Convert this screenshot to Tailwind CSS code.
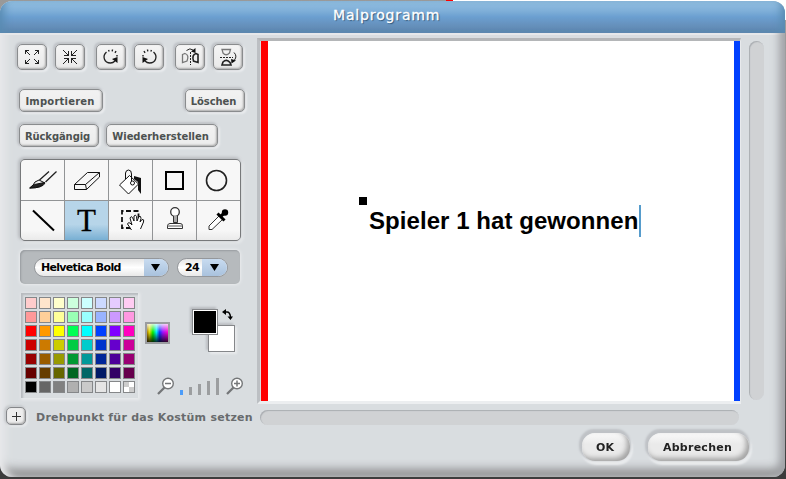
<!DOCTYPE html>
<html lang="de">
<head>
<meta charset="utf-8">
<title>Malprogramm</title>
<script src="https://cdn.jsdelivr.net/npm/@tailwindcss/browser@4"></script>
</head>
<body class="w-[786px] h-[479px] overflow-hidden bg-[linear-gradient(#999,#aaa_50%,#3c3c3c_98%)] pt-px font-['DejaVu_Sans',sans-serif]">
<div class="fixed top-0 left-[452px] w-[334px] h-[20px] bg-white"></div>
<div class="fixed top-0 left-[446px] w-[7px] h-[2px] bg-[#ff0000]"></div>
<div class="relative w-[785px] h-[476px] rounded-[12px] overflow-hidden bg-[#d9dde0] flex flex-col">
  <div class="absolute inset-0 pointer-events-none shadow-[inset_8px_0_7px_-2px_#e8e9eb,inset_-9px_0_8px_-3px_#a3a5a9,inset_0_-11px_10px_-3px_#909192] rounded-[12px]"></div>
  <header class="relative h-8 shrink-0 bg-[linear-gradient(#93bfe0,#80b0d9_30%,#6b9fd0_50%,#6691bd_75%,#5b86ac)] shadow-[inset_9px_0_9px_-5px_#598bb2,inset_-9px_0_9px_-5px_#598bb2] pl-[333px]">
    <h1 class="text-[14px] leading-[28px] text-white tracking-[0.85px] whitespace-nowrap [-webkit-text-stroke:0.3px_#fff] [text-shadow:1px_1px_1px_#2c5478]">Malprogramm</h1>
  </header>
  <div class="h-[2px] shrink-0 bg-[#e6e8ea]"></div>
  <main class="relative flex h-[367px] shrink-0">
    <section class="w-[257px] shrink-0 flex flex-col pt-[9px] text-[#4c5150]">
      <div class="flex h-[26px] ml-[17px]">
        <button class="w-[30px] h-[26px] mr-[8px] rounded-[5px] border border-[#8a8c8e] bg-[linear-gradient(#f5f5f5,#e9e9e9)] shadow-[inset_-1px_-1px_2px_#aaa,-1px_-1px_2px_1px_#c0c3c7,1px_1px_2px_1px_#eceef0] flex items-center justify-center"><svg width="16" height="16" viewBox="0 0 16 16" fill="none" stroke="#222" shape-rendering="crispEdges"><path d="M1.500 5V1.500H5M11 1.500H14.500V5M14.500 11V14.500H11M5 14.500H1.500V11M2 2L6 6M14 2L10 6M14 14L10 10M2 14L6 10"/></svg></button>
        <button class="w-[30px] h-[26px] mr-[11px] rounded-[5px] border border-[#8a8c8e] bg-[linear-gradient(#f5f5f5,#e9e9e9)] shadow-[inset_-1px_-1px_2px_#aaa,-1px_-1px_2px_1px_#c0c3c7,1px_1px_2px_1px_#eceef0] flex items-center justify-center"><svg width="16" height="16" viewBox="0 0 16 16" fill="none" stroke="#222" shape-rendering="crispEdges"><path d="M2 6.500H6.500V2M9.500 2V6.500H14M14 9.500H9.500V14M6.500 14V9.500H2M1 1L6 6M15 1L10 6M15 15L10 10M1 15L6 10"/></svg></button>
        <button class="w-[30px] h-[26px] mr-[8px] rounded-[5px] border border-[#8a8c8e] bg-[linear-gradient(#f5f5f5,#e9e9e9)] shadow-[inset_-1px_-1px_2px_#aaa,-1px_-1px_2px_1px_#c0c3c7,1px_1px_2px_1px_#eceef0] flex items-center justify-center"><svg width="18" height="18" viewBox="0 0 18 18" fill="none" stroke="#222"><path d="M4.500 4C0 8 2 15 8.500 15Q11 15 13 13" stroke-width="1.3"/><path d="M6.500 2l.7 1.500M10.500 1.500l-.3 1.800M14 3l-1 1.800M15 7v1.600" stroke-width="1.400"/><path d="M10 11L15.500 9V15Z" fill="#111" stroke="none"/></svg></button>
        <button class="w-[30px] h-[26px] mr-[11px] rounded-[5px] border border-[#8a8c8e] bg-[linear-gradient(#f5f5f5,#e9e9e9)] shadow-[inset_-1px_-1px_2px_#aaa,-1px_-1px_2px_1px_#c0c3c7,1px_1px_2px_1px_#eceef0] flex items-center justify-center"><svg width="18" height="18" viewBox="0 0 18 18" fill="none" stroke="#222"><path d="M13.500 4C18 8 16 15 9.500 15Q7 15 5 13" stroke-width="1.300"/><path d="M11.500 2l-.7 1.500M7.500 1.500l.3 1.800M4 3l1 1.800M3 7v1.600" stroke-width="1.400"/><path d="M8 11L2.500 9V15Z" fill="#111" stroke="none"/></svg></button>
        <button class="w-[30px] h-[26px] mr-[8px] rounded-[5px] border border-[#8a8c8e] bg-[linear-gradient(#f5f5f5,#e9e9e9)] shadow-[inset_-1px_-1px_2px_#aaa,-1px_-1px_2px_1px_#c0c3c7,1px_1px_2px_1px_#eceef0] flex items-center justify-center"><svg width="20" height="20" viewBox="0 0 20 20" fill="none" stroke="#222"><path d="M10.500 5V18" stroke-dasharray="2 1"/><path d="M2.500 7.500L5 6.500Q9.500 8 7 14L2.500 15.500Z" stroke="#777" stroke-width="1.300"/><path d="M18 7.500L16 6.500Q11.500 8 13.500 14L18 15.500Z" stroke-width="1.600"/><path d="M6.500 3.500Q10 .5 13 3"/><path d="M15.500 1V6L11 4.500Z" fill="#111" stroke="none"/></svg></button>
        <button class="w-[30px] h-[26px] rounded-[5px] border border-[#8a8c8e] bg-[linear-gradient(#f5f5f5,#e9e9e9)] shadow-[inset_-1px_-1px_2px_#aaa,-1px_-1px_2px_1px_#c0c3c7,1px_1px_2px_1px_#eceef0] flex items-center justify-center"><svg width="20" height="20" viewBox="0 0 20 20" fill="none" stroke="#222"><path d="M2 10.500H15" stroke-dasharray="2 1"/><path d="M4 2.500H12.500L11.500 6Q8 9.500 5 6Z" stroke="#777" stroke-width="1.300"/><path d="M4 18H13L12 15.500Q8.500 11.500 5 15Z" stroke-width="1.600"/><path d="M16 5.500Q19.500 9 16.500 13"/><path d="M13 12L18 13.500L13.500 16.500Z" fill="#111" stroke="none"/></svg></button>
      </div>
      <div class="flex justify-between mt-[19px] ml-[19px] w-[226px] h-[23px] text-[10px] font-bold">
        <button class="w-[84px] rounded-[5px] border border-[#8a8c8e] bg-[linear-gradient(#f2f2f2,#ececec)] shadow-[inset_-1px_-1px_2px_#aaa,-1px_-1px_2px_1px_#c0c3c7,1px_1px_2px_1px_#eceef0] tracking-[0.2px] pt-px pr-[2px]">Importieren</button>
        <button class="w-[60px] rounded-[5px] border border-[#8a8c8e] bg-[linear-gradient(#f2f2f2,#ececec)] shadow-[inset_-1px_-1px_2px_#aaa,-1px_-1px_2px_1px_#c0c3c7,1px_1px_2px_1px_#eceef0] tracking-[-0.1px] pt-px pr-[3px]">Löschen</button>
      </div>
      <div class="flex mt-[12px] ml-[19px] h-[23px] gap-[7px] text-[10px] font-bold">
        <button class="w-[80px] rounded-[5px] border border-[#8a8c8e] bg-[linear-gradient(#f2f2f2,#ececec)] shadow-[inset_-1px_-1px_2px_#aaa,-1px_-1px_2px_1px_#c0c3c7,1px_1px_2px_1px_#eceef0] tracking-[-0.1px] pt-px pr-[3px]">Rückgängig</button>
        <button class="w-[112px] rounded-[5px] border border-[#8a8c8e] bg-[linear-gradient(#f2f2f2,#ececec)] shadow-[inset_-1px_-1px_2px_#aaa,-1px_-1px_2px_1px_#c0c3c7,1px_1px_2px_1px_#eceef0] tracking-[-0.05px] pt-px pr-[3px]">Wiederherstellen</button>
      </div>
      <div class="grid grid-cols-[43px_43px_43px_43px_43px] grid-rows-[40px_39px] gap-px mt-[12px] ml-[20px] w-[221px] h-[82px] rounded-[5px] border border-[#77797b] bg-[#929496] overflow-hidden shadow-[-1px_-1px_3px_1px_#b8bbbf,1px_1px_3px_1px_#eceef0] text-black">
        <div class="bg-[#f7f7f7]"><svg width="43" height="40" fill="none" stroke="#111"><path d="M18.500 20L28 11.500M24.500 22L35.500 11.500" stroke="#222" stroke-width="1.300"/><path d="M18 20L24 23Q22 28 8.500 28Q13 25 14 22Z" fill="#eee"/><path d="M13.500 24.500L23.500 22.500Q21 28 9 28Z" fill="#222"/></svg></div>
        <div class="bg-[#f7f7f7]"><svg width="43" height="40" fill="none" stroke="#111"><path d="M9.500 24.500L22.500 12.500H34.500V17L21.500 29.500H9.500ZM9.500 24.500H20.500L34.500 12.500M20.500 24.500L21.500 29.500"/></svg></div>
        <div class="bg-[#f7f7f7]"><svg width="43" height="40" fill="none" stroke="#111"><path d="M25 16L32 18V34L29 30V22L25 19Z" fill="#111" stroke="none"/><path d="M10.500 25L20.500 15.500L29.500 24L19.500 34Z" fill="#fff"/><path d="M16.500 19V13Q17 10 19.500 10Q22.500 10 22.500 14V21"/><circle cx="23.500" cy="23" r="2" fill="#fff"/></svg></div>
        <div class="bg-[#f7f7f7]"><svg width="43" height="40"><rect x="13" y="12" width="17" height="17" fill="none" stroke="#000" stroke-width="2"/></svg></div>
        <div class="bg-[#f7f7f7]"><svg width="43" height="40"><circle cx="19.500" cy="20.500" r="10" fill="none" stroke="#222" stroke-width="1.600"/></svg></div>
        <div class="bg-[linear-gradient(#f7f7f7_75%,#eaeaea)]"><svg width="43" height="39"><path d="M12 9.500L33 29.500" stroke="#000" stroke-width="2"/></svg></div>
        <div class="bg-[linear-gradient(#b7d5e9_60%,#78afd3)] flex justify-center"><span class="font-['Liberation_Serif',serif] text-[31px] leading-[40px] [-webkit-text-stroke:0.3px_#000]">T</span></div>
        <div class="bg-[linear-gradient(#f7f7f7_75%,#eaeaea)]"><svg width="43" height="39" fill="none" stroke="#111"><path d="M22 27H13V10H29.500V17" stroke-width="1.800" stroke-dasharray="5 2.500"/><path d="M22.500 29L18.500 23Q19 21 21 22L23 24L21 17Q22 14.500 23.500 16.500L25 20V15Q26.500 13 27.500 15.500L28 20L30 15.500Q32 14.500 32 17.500L31 21L33 18.500Q35.500 18 34.500 21L31.500 28" fill="#fff"/></svg></div>
        <div class="bg-[linear-gradient(#f7f7f7_75%,#eaeaea)]"><svg width="43" height="39" fill="#fff" stroke="#333"><circle cx="22" cy="11" r="4.300" stroke-width="1.300"/><path d="M20.500 15V21.500H24.500V15" fill="#aaa"/><path d="M14.500 24.500Q15 22.500 17 22.500H27Q29.500 22.500 29.500 24.500V27.500H14.500Z"/><path d="M14 25H30" stroke="#555"/></svg></div>
        <div class="bg-[linear-gradient(#f7f7f7_75%,#eaeaea)]"><svg width="43" height="39" fill="#fff" stroke="#333"><path d="M22.500 14.500L12 25V28.500H15L26 18Z"/><circle cx="28" cy="11.500" r="3.200" fill="#000" stroke="none"/><path d="M20.500 12.500L27.500 19.500M24 15L28 11.500" stroke="#000" stroke-width="3"/></svg></div>
      </div>
      <div class="flex items-center mt-[9px] ml-[20px] w-[220px] h-[34px] pl-[14px] gap-[8px] rounded-[5px] bg-[#b6babd] shadow-[inset_1px_1px_2px_#979b9f,0_0_3px_1px_#e9ebed] text-black">
        <div class="w-[135px] h-[19px] flex rounded-full border border-[#94979b] overflow-hidden bg-[linear-gradient(#e5e5e5,#fff_50%,#e8e8e8)]"><span class="w-[109px] pl-[6px] text-[11px] leading-[18px] font-bold tracking-[-0.7px] whitespace-nowrap">Helvetica Bold</span><span class="flex-1 flex items-center pl-[7px] bg-[linear-gradient(#c8dbf0,#a9c2dd)]"><svg width="9" height="7"><path d="M0 0H9L4.500 7Z"/></svg></span></div>
        <div class="w-[51px] h-[19px] flex rounded-full border border-[#94979b] overflow-hidden bg-[linear-gradient(#e5e5e5,#fff_50%,#e8e8e8)]"><span class="w-[24px] pl-[7px] text-[11px] leading-[18px] font-bold tracking-[-0.6px]">24</span><span class="flex-1 flex items-center pl-[8px] bg-[linear-gradient(#c8dbf0,#a9c2dd)]"><svg width="9" height="7"><path d="M0 0H9L4.500 7Z"/></svg></span></div>
      </div>
      <div class="flex mt-[9px]">
        <div id="palette" class="ml-[21px] w-[117px] h-[105px] grid grid-cols-[repeat(8,12px)] auto-rows-[12px] gap-[2px] pt-[4px] pl-[4px] shadow-[inset_2px_2px_2px_#b8bbbf,1px_1px_3px_1px_#e9ebed]"></div>
        <div class="ml-[7px] mt-[29px] w-[25px] h-[22px] border-2 border-[#9a9c9f] bg-[linear-gradient(#fffc,transparent_45%,#000c),linear-gradient(90deg,#a70,#dd0_12%,#0e0_28%,#0ef_45%,#13f_60%,#91f_75%,#f0c)]"></div>
      </div>
    </section>
    <div class="w-[484px] shrink-0 mt-[3px] h-[366px] border-t-[3px] border-t-[#b4b6b8] border-l-[3px] border-l-[#bcbfc3] border-b-[3px] border-b-[#eceef0] border-r border-r-[#e8eaec] flex pl-px">
      <div class="flex-1 flex bg-white">
        <div class="w-[7px] bg-[#ff0000]"></div>
        <div class="relative flex-1">
          <div class="absolute left-[91px] top-[156px] size-[8px] bg-black"></div>
          <div class="absolute left-[101px] top-[164px] h-[32px] border-r-2 border-[#569ccc] w-[272px] font-['Liberation_Sans',sans-serif] text-[24px] leading-[31px] font-bold text-black whitespace-nowrap tracking-[0.06px]">Spieler 1 hat gewonnen</div>
        </div>
        <div class="w-[6px] bg-[#0040ff]"></div>
      </div>
    </div>
    <div class="ml-[8px] mt-[6px] w-[15px] h-[359px] rounded-full bg-[#d0d2d4] shadow-[inset_1px_1px_1px_#aaaeb2]"></div>
    <div class="absolute left-[191px] top-[274px] w-[56px] h-[48px]">
      <div class="absolute left-[17px] top-[16px] size-[27px] border border-[#85878a] bg-white shadow-[-2px_-2px_2px_#bcbfc3,2px_2px_2px_#e9ebed]"></div>
      <div class="absolute left-px top-0 size-[26px] border border-[#85878a] bg-black shadow-[inset_0_0_0_1px_#fff,-2px_-2px_2px_#b8bbbf]"></div>
      <svg class="absolute left-[30px] top-0" width="14" height="12"><path d="M4 3H6Q9 3 9.500 8" fill="none" stroke="#000" stroke-width="1.500"/><path d="M1 3L5 0V6ZM6.500 7.500H12L9.500 11Z"/></svg>
    </div>
    <div class="absolute left-[157px] top-[342px] flex items-end h-[18px]">
      <svg class="mr-[5px]" width="18" height="18" fill="#fff" stroke="#747678"><path d="M1 17L8 10" stroke-width="2.300"/><circle cx="11" cy="6.500" r="5.300" stroke-width="1.400"/><path d="M8 6.500H14" stroke-width="1.500"/></svg>
      <div class="flex items-end h-[17px] gap-[6px]"><i class="w-[3px] h-[5px] bg-[#4b9cfa]"></i><i class="w-[3px] h-[8px] bg-[#9c9ea0]"></i><i class="w-[3px] h-[11px] bg-[#9c9ea0]"></i><i class="w-[3px] h-[14px] bg-[#9c9ea0]"></i><i class="w-[3px] h-[17px] bg-[#9c9ea0]"></i></div>
      <svg class="ml-[7px]" width="18" height="18" fill="#fff" stroke="#747678"><path d="M1 17L8 10" stroke-width="2.300"/><circle cx="11" cy="6.500" r="5.300" stroke-width="1.400"/><path d="M8 6.500H14M11 3.500V9.500" stroke-width="1.500"/></svg>
    </div>
  </main>
  <div class="relative h-[27px] shrink-0 flex pt-[5px] pl-[6px]">
    <button class="w-[20px] h-[18px] rounded-[5px] border border-[#85878a] bg-[#eee] shadow-[inset_-1px_-1px_2px_#aaa,-1px_-1px_2px_1px_#c8cbce,1px_1px_2px_1px_#e8eaec] flex items-center justify-center"><svg width="9" height="9"><path d="M0 4.500H9M4.500 0V9" stroke="#333"/></svg></button>
    <span class="ml-[10px] w-[224px] text-[11px] leading-[22px] font-bold text-[#686b6d] tracking-[0.25px] whitespace-nowrap">Drehpunkt für das Kostüm setzen</span>
    <div class="mt-[3px] w-[479px] h-[15px] rounded-full bg-[#d0d2d4] shadow-[inset_1px_1px_1px_#aaaeb2]"></div>
  </div>
  <div class="relative flex h-[28px] mt-[4px] ml-[582px] gap-[18px] text-[11px] font-bold text-[#222]">
    <button class="w-[48px] rounded-[13px] bg-[linear-gradient(#fafafa,#eaeaea_40%,#eaeaea)] shadow-[inset_-3px_-3px_5px_#a4a4a4,-1px_-2px_2px_2px_#bfc2c6,1px_2px_2px_2px_#e9ebed] pt-[3px] pr-[2px]">OK</button>
    <button class="w-[101px] rounded-[13px] bg-[linear-gradient(#fafafa,#eaeaea_40%,#eaeaea)] shadow-[inset_-3px_-3px_5px_#a4a4a4,-1px_-2px_2px_2px_#bfc2c6,1px_2px_2px_2px_#e9ebed] pt-[3px] pr-[2px] tracking-[0.25px]">Abbrechen</button>
  </div>
</div>
<script>
const colors = [
  '#ffcccc','#ffe5cc','#ffffcc','#ccffdd','#ccffff','#ccd9ff','#e5ccff','#ffccf2',
  '#ff9999','#ffcf99','#ffff99','#99ffb5','#99ffff','#99b3ff','#cc99ff','#ff99e1',
  '#ff0000','#ff9900','#ffff00','#00ff55','#00ffff','#0040ff','#8000ff','#ff00bf',
  '#cc0000','#cc7a00','#cccc00','#00cc44','#00cccc','#0033cc','#6600cc','#cc0099',
  '#990000','#995c00','#999900','#009933','#009999','#002699','#4d0099','#990073',
  '#660000','#663d00','#666600','#006622','#006666','#001a66','#330066','#66004d',
  '#000000','#666666','#808080','#b0b0b0','#cacaca','#e5e5e5','#ffffff','repeating-conic-gradient(#fff 0 25%,#ccc 0 50%)'
];
document.getElementById('palette').innerHTML = colors.map(c => `<i class="border border-[#858789]" style="background:${c}"></i>`).join('');
</script>
</body>
</html>
